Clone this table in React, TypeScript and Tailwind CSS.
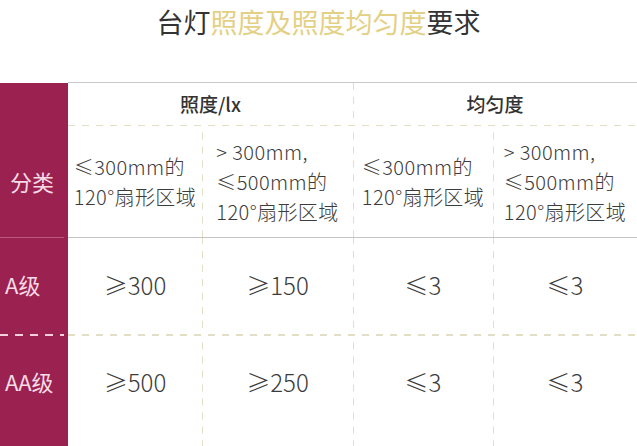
const font = "font-['Noto_Sans_CJK_SC','Noto_Sans',sans-serif]";

const vDash =
    'bg-[linear-gradient(to_bottom,#e3dec6_7px,transparent_7px)] bg-[length:1px_14px] bg-repeat-y bg-left';

const areaLines = [
    ['≤300mm的', '120°扇形区域'],
    ['> 300mm,', '≤500mm的', '120°扇形区域'],
];

const grades = [
    { name: 'A级', values: ['≥300', '≥150', '≤3', '≤3'] },
    { name: 'AA级', values: ['≥500', '≥250', '≤3', '≤3'] },
];

function AreaCell({ lines, line }: { lines: string[]; line: boolean }) {
    return (
        <div className={`flex items-center justify-center ${line ? vDash : ''}`}>
            <div className="text-left text-[20px] leading-[30px] font-light tracking-[0.4px] text-[#3c3c3c]">
                {lines.map((t) => (
                    <div key={t} className="whitespace-nowrap">{t}</div>
                ))}
            </div>
        </div>
    );
}

export default function App() {
    return (
        <div className={`w-[637px] h-[446px] overflow-hidden bg-white ${font}`}>
            {/* 标题 */}
            <div className="h-[82px] pt-[5px] text-center text-[27px] leading-[34px] text-[#333]">
                台灯<span className="text-[#e4d084]">照度及照度均匀度</span>要求
            </div>

            <div className="grid grid-cols-[68px_134px_151px_140px_144px] grid-rows-[1px_42px_1px_111px_1px_96px_2px_111px]">
                {/* 顶部实线 */}
                <div />
                <div className="col-span-4 bg-[#c9c9c9]" />

                {/* 表头 */}
                <div className="bg-[#9b2150]" />
                <div className="col-span-2 flex items-center justify-center text-[19px] font-medium text-[#333]">
                    照度/lx
                </div>
                <div className={`col-span-2 flex items-center justify-center text-[19px] font-medium text-[#333] ${vDash}`}>
                    均匀度
                </div>

                {/* 虚线 */}
                <div className="bg-[#9b2150]" />
                <div className="col-span-4 bg-[linear-gradient(to_right,#e3dec6_7px,transparent_7px)] bg-[length:14px_1px]" />

                {/* 分类 */}
                <div className="bg-[#9b2150] flex items-center pl-[10px] text-[22px] text-[#f7dbe5]">
                    分类
                </div>
                <AreaCell lines={areaLines[0]} line={false} />
                <AreaCell lines={areaLines[1]} line />
                <AreaCell lines={areaLines[0]} line />
                <AreaCell lines={areaLines[1]} line />

                {/* 实线 */}
                <div className="bg-[#9b2150] pr-[4px]">
                    <div className="h-px bg-[#b9577c]" />
                </div>
                <div className="col-span-4 bg-[#c4c4c4]" />

                {grades.map((g, i) => (
                    <>
                        {i > 0 && (
                            <>
                                <div key={`rd${i}`} className="bg-[#9b2150] pr-[4px]">
                                    <div className="h-[2px] bg-[linear-gradient(to_right,#f5cfdc_8px,transparent_8px)] bg-[length:15px_2px]" />
                                </div>
                                <div key={`wd${i}`} className="col-span-4 bg-[linear-gradient(to_right,#e3dec6_7px,transparent_7px)] bg-[length:14px_1px] bg-no-repeat-y" />
                            </>
                        )}
                        <div key={`n${i}`} className={`bg-[#9b2150] flex pl-[5px] text-[22px] text-[#f7dbe5] ${i === 0 ? 'items-center pb-[3px]' : 'items-start pt-[29px]'}`}>
                            {g.name}
                        </div>
                        {g.values.map((v, j) => (
                            <div
                                key={`${i}-${j}`}
                                className={`flex justify-center text-[24px] font-light text-[#3c3c3c] ${i === 0 ? 'items-center pb-[3px]' : 'items-start pt-[28px]'} ${j > 0 ? vDash : ''}`}
                            >
                                {v}
                            </div>
                        ))}
                    </>
                ))}
            </div>
        </div>
    );
}
